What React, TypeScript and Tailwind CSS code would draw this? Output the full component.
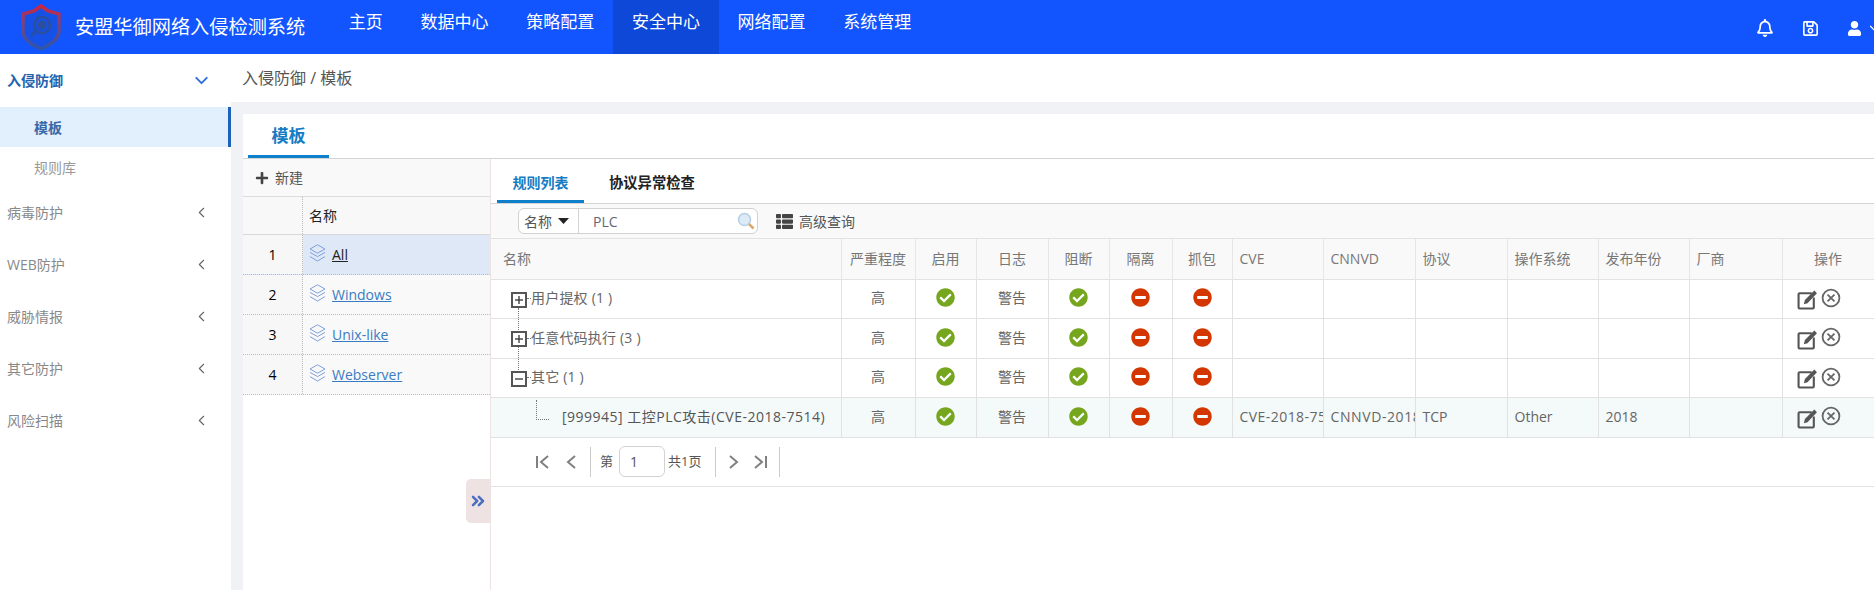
import { ChevronDown, ChevronLeft, ChevronsRight } from "lucide-react";
import { FaCheckCircle, FaMinusCircle, FaPlus, FaRegBell, FaRegSave, FaThList, FaUser } from "react-icons/fa";

const font = "font-['Open_Sans','Noto_Sans_CJK_SC',sans-serif]";

const navItems = ["主页", "数据中心", "策略配置", "安全中心", "网络配置", "系统管理"];
const sideItems = ["病毒防护", "WEB防护", "威胁情报", "其它防护", "风险扫描"];
const templates = ["All", "Windows", "Unix-like", "Webserver"];

const columns = [
  { name: "名称", w: "w-[350px]", align: "text-left pl-3" },
  { name: "严重程度", w: "w-[74px]", align: "text-center" },
  { name: "启用", w: "w-[61px]", align: "text-center" },
  { name: "日志", w: "w-[72px]", align: "text-center" },
  { name: "阻断", w: "w-[61px]", align: "text-center" },
  { name: "隔离", w: "w-[63px]", align: "text-center" },
  { name: "抓包", w: "w-[60px]", align: "text-center" },
  { name: "CVE", w: "w-[91px]", align: "text-left pl-[7px]" },
  { name: "CNNVD", w: "w-[92px]", align: "text-left pl-[7px]" },
  { name: "协议", w: "w-[92px]", align: "text-left pl-[7px]" },
  { name: "操作系统", w: "w-[91px]", align: "text-left pl-[7px]" },
  { name: "发布年份", w: "w-[91px]", align: "text-left pl-[7px]" },
  { name: "厂商", w: "w-[93px]", align: "text-left pl-[7px]" },
  { name: "操作", w: "w-[92px]", align: "text-center" },
];

const rows = [
  { label: "用户提权 (1 )", kind: "plus", h: "h-[39px]", line: "h-[24px]" },
  { label: "任意代码执行 (3 )", kind: "plus", h: "h-[40px]", line: "h-[25px]" },
  { label: "其它 (1 )", kind: "minus", h: "h-[39px]" },
  {
    label: "[999945] 工控PLC攻击(CVE-2018-7514)",
    kind: "leaf",
    h: "h-[40px]",
    cve: "CVE-2018-7514",
    cnnvd: "CNNVD-201803-1127",
    proto: "TCP",
    os: "Other",
    year: "2018",
  },
];

function Logo() {
  return (
    <svg width="40" height="46" viewBox="0 0 40 46" fill="none">
      <defs>
        <linearGradient id="shieldStroke" x1="0" y1="0" x2="0" y2="1">
          <stop offset="0" stopColor="#d0243c" />
          <stop offset="0.35" stopColor="#83407a" />
          <stop offset="1" stopColor="#2d56aa" />
        </linearGradient>
      </defs>
      <path d="M20 2 L27 7 L38 10 L38 27 C38 35 29 41 20 45 C11 41 2 35 2 27 L2 10 L13 7 Z" stroke="url(#shieldStroke)" strokeWidth="3.5" fill="#1b4dc6" fillOpacity="0.4" />
      <circle cx="21" cy="21" r="8" stroke="#2b4f9e" strokeWidth="2.5" />
      <circle cx="21" cy="21" r="4.5" fill="#2b4f9e" />
      <path d="M15 27 L10 32" stroke="#2b4f9e" strokeWidth="2.5" />
    </svg>
  );
}

function Layers() {
  return (
    <svg width="17" height="18" viewBox="0 0 17 18" fill="none" stroke="#7f9fdc" strokeWidth="1">
      <path d="M8.5 0.8 L16 5 L8.5 9.2 L1 5 Z" />
      <path d="M1 8.4 L8.5 12.6 L16 8.4" />
      <path d="M1 12.6 L8.5 17 L16 12.6" />
    </svg>
  );
}

function Magnifier() {
  return (
    <svg width="18" height="18" viewBox="0 0 18 18" fill="none">
      <path d="M11 11 L16.5 16.5" stroke="#dca96a" strokeWidth="2.5" />
      <circle cx="7.5" cy="7.5" r="6" fill="#dcebf7" stroke="#b4cfe4" strokeWidth="1.5" />
    </svg>
  );
}

function EditIcon() {
  return (
    <svg width="21" height="21" viewBox="0 0 20 20" fill="none">
      <path d="M14 4 H2.5 a1 1 0 0 0 -1 1 V17.5 a1 1 0 0 0 1 1 H15 a1 1 0 0 0 1 -1 V8" stroke="#555" strokeWidth="2" />
      <path d="M16.5 1.5 L19 4 L10 13.5 L6.5 14.5 L7.5 10.5 Z" fill="#555" />
    </svg>
  );
}

function CloseIcon() {
  return (
    <svg width="20" height="20" viewBox="0 0 19 19" fill="none" stroke="#666" strokeWidth="1.7">
      <circle cx="9.5" cy="9.5" r="8" />
      <path d="M6.2 6.2 L12.8 12.8 M12.8 6.2 L6.2 12.8" />
    </svg>
  );
}

function PageIcon({ d }: { d: string }) {
  return (
    <svg width="16" height="16" viewBox="0 0 16 16" fill="none" stroke="#808080" strokeWidth="2" className="shrink-0">
      <path d={d} />
    </svg>
  );
}

function TreeBox({ minus, line }: { minus?: boolean; line?: string }) {
  return (
    <span className="relative mt-[4px] flex h-[16px] w-[16px] shrink-0 items-center justify-center border-2 border-[#555] bg-white">
      <svg width="8" height="8" viewBox="0 0 8 8" stroke="#333" strokeWidth="1.3">
        <path d="M0 4 H8" />
        {!minus && <path d="M4 0 V8" />}
      </svg>
      {line && <span className={`absolute left-[5px] top-[14px] border-l border-dotted border-[#777] ${line}`} />}
    </span>
  );
}

export default function App() {
  return (
    <div className={`${font} flex h-[590px] w-[1874px] flex-col overflow-hidden bg-white text-[14px] text-[#666]`}>
      {/* top bar */}
      <header className="flex h-[54px] shrink-0 items-stretch bg-[#1254fe] text-white">
        <div className="ml-[21px] mt-[4px]">
          <Logo />
        </div>
        <div className="ml-[14px] w-[255px] self-center whitespace-nowrap text-[19.2px]">安盟华御网络入侵检测系统</div>
        <nav className="flex">
          {navItems.map((item) => (
            <div
              key={item}
              className={`flex items-center px-[18.85px] pb-[11px] text-[17px] ${item === "安全中心" ? "bg-[#0e48d8]" : ""}`}
            >
              {item}
            </div>
          ))}
        </nav>
        <div className="ml-auto flex items-center gap-[28px] pt-[2px]">
          <FaRegBell size={18} />
          <FaRegSave size={17} />
          <div className="flex w-[27px] items-center gap-[5px] overflow-hidden">
            <FaUser size={15} className="shrink-0" />
            <ChevronDown size={14} strokeWidth={2} className="shrink-0" />
          </div>
        </div>
      </header>

      <div className="flex min-h-0 flex-1">
        {/* side menu */}
        <aside className="w-[231px] shrink-0">
          <div className="flex h-[53px] items-center justify-between pl-[7px] pr-[19px] font-bold text-[#1f62ae]">
            <span className="text-[14px]">入侵防御</span>
            <ChevronDown size={21} strokeWidth={2.2} className="text-[#2f6fdc]" />
          </div>
          <div className="flex h-[40px] items-center border-r-[3px] border-[#1c62b9] bg-[#e2effd] pl-[34px] font-bold text-[#3a6aa8]">
            模板
          </div>
          <div className="flex h-[39px] items-center pl-[34px] pt-[1px] text-[#999]">规则库</div>
          {sideItems.map((item) => (
            <div key={item} className="flex h-[52px] items-center justify-between pl-[7px] pr-[21px] text-[#888]">
              <span>{item}</span>
              <ChevronLeft size={17} strokeWidth={1.6} className="text-[#666]" />
            </div>
          ))}
        </aside>

        <main className="flex min-w-0 flex-1 flex-col">
          <div className="flex h-[48px] shrink-0 items-center pl-[11px] text-[16px] text-[#555]">入侵防御 / 模板</div>
          <div className="flex min-h-0 flex-1 flex-col bg-[#f0f2f6] pl-[12px] pt-[12px]">
            <div className="flex min-h-0 flex-1 flex-col bg-white">
              {/* panel tab */}
              <div className="flex h-[45px] shrink-0 border-b border-[#d4d4d4] pl-[5px]">
                <div className="flex h-[44px] w-[81px] items-center justify-center border-b-[3px] border-[#0d7fcb] pt-[2px] text-[17px] font-bold text-[#167cc4]">
                  模板
                </div>
              </div>

              <div className="flex min-h-0 flex-1">
                {/* template list */}
                <div className="relative w-[248px] shrink-0 border-r border-[#eee4e4]">
                  <div className="flex h-[38px] items-center gap-[6px] border-b border-[#dcdcdc] bg-[#f9f9f9] pl-[12px] text-[14px] text-[#555]">
                    <FaPlus size={14} className="text-[#444]" />
                    新建
                  </div>
                  <div className="flex h-[38px] border-b border-[#d8d8d8] bg-[#f8f8f8] text-[#222]">
                    <div className="w-[60px] border-r border-dotted border-[#bbb]" />
                    <div className="flex items-center pl-[6px]">名称</div>
                  </div>
                  {templates.map((name, i) => (
                    <div
                      key={name}
                      className={`flex h-[40px] border-b border-dotted border-[#bbb] ${i === 0 ? "bg-[#dfe8f6]" : "bg-[#f9f9f9]"}`}
                    >
                      <div className="flex w-[60px] items-center justify-center border-r border-dotted border-[#bbb] bg-[#f7f7f7] text-black">
                        {i + 1}
                      </div>
                      <div className="flex items-center gap-[6px] pl-[6px]">
                        <span className="mb-[4px]">
                          <Layers />
                        </span>
                        <span className={`underline ${i === 0 ? "text-[#222]" : "text-[#3a7cc4]"}`}>{name}</span>
                      </div>
                    </div>
                  ))}
                  <div className="absolute right-0 top-[320px] flex h-[44px] w-[24px] items-center justify-center rounded-l-[5px] bg-[#eee2e3]">
                    <ChevronsRight size={20} strokeWidth={3} className="text-[#4a6fc0]" />
                  </div>
                </div>

                {/* rule list */}
                <div className="min-w-0 flex-1">
                  <div className="flex h-[45px] border-b border-[#d4d4d4] pl-[6px] font-bold">
                    <div className="flex h-[44px] w-[87px] items-center justify-center border-b-[3px] border-[#0d7fcb] pt-[5px] text-[#167cc4]">
                      规则列表
                    </div>
                    <div className="ml-[25px] flex h-[44px] items-center pt-[3px] text-[14.3px] text-[#222]">协议异常检查</div>
                  </div>
                  <div className="flex h-[35px] items-center border-b border-[#e2e2e2] bg-[#f9f9f9] pl-[27px]">
                    <div className="flex h-[26px] w-[240px] items-center rounded-[6px] border border-[#d2d2d2] bg-white">
                      <div className="flex h-full w-[60px] items-center gap-[5px] border-r border-[#d2d2d2] pl-[5px] text-[#555]">
                        名称
                        <svg width="11" height="6" viewBox="0 0 11 6" className="ml-[1px]">
                          <path d="M0 0 H11 L5.5 6 Z" fill="#222" />
                        </svg>
                      </div>
                      <span className="ml-[14px] text-[#667]">PLC</span>
                      <span className="ml-auto mr-[2px]">
                        <Magnifier />
                      </span>
                    </div>
                    <div className="ml-[18px] flex items-center gap-[6px] text-[#555]">
                      <FaThList size={17} className="text-[#444]" />
                      高级查询
                    </div>
                  </div>

                  <table className="w-[1383px] table-fixed border-collapse">
                    <colgroup>
                      {columns.map((c) => (
                        <col key={c.name} className={c.w} />
                      ))}
                    </colgroup>
                    <thead>
                      <tr className="h-[40px] border-b border-[#e2e2e2] bg-[#f9f9f9]">
                        {columns.map((c) => (
                          <th key={c.name} className={`border-r border-[#e6e6e6] font-normal text-[#777] ${c.align}`}>
                            {c.name}
                          </th>
                        ))}
                      </tr>
                    </thead>
                    <tbody>
                      {rows.map((r) => (
                        <tr key={r.label} className={`${r.h} border-b border-[#e2e2e2] [&>td]:pb-[2px] ${r.kind === "leaf" ? "bg-[#f4f9f9]" : ""}`}>
                          <td className="border-r border-[#e2e2e2] pl-[20px] text-[#666]">
                            {r.kind === "leaf" ? (
                              <div className="flex items-center pl-[25px] text-[#555]">
                                <span className="mb-[12px] h-[20px] w-[13px] border-b border-l border-dotted border-[#777]" />
                                <span className="ml-[13px] whitespace-nowrap tracking-[0.5px]">{r.label}</span>
                              </div>
                            ) : (
                              <div className="flex items-center">
                                <TreeBox minus={r.kind === "minus"} line={r.line} />
                                <span className="mt-[2px] w-[4px] border-t border-dotted border-[#777]" />
                                <span className="whitespace-nowrap tracking-[0.2px]">{r.label}</span>
                              </div>
                            )}
                          </td>
                          <td className="border-r border-[#e2e2e2] text-center">高</td>
                          <td className="border-r border-[#e2e2e2]">
                            <FaCheckCircle size={19} className="mx-auto text-[#76a51e]" />
                          </td>
                          <td className="border-r border-[#e2e2e2] text-center">警告</td>
                          <td className="border-r border-[#e2e2e2]">
                            <FaCheckCircle size={19} className="mx-auto text-[#76a51e]" />
                          </td>
                          <td className="border-r border-[#e2e2e2]">
                            <FaMinusCircle size={19} className="mx-auto text-[#d43600]" />
                          </td>
                          <td className="border-r border-[#e2e2e2]">
                            <FaMinusCircle size={19} className="mx-auto text-[#d43600]" />
                          </td>
                          <td className="overflow-hidden whitespace-nowrap border-r border-[#e2e2e2] pl-[7px] tracking-[0.45px]">{r.cve}</td>
                          <td className="overflow-hidden whitespace-nowrap border-r border-[#e2e2e2] pl-[7px] tracking-[0.6px]">{r.cnnvd}</td>
                          <td className="border-r border-[#e2e2e2] pl-[7px]">{r.proto}</td>
                          <td className="border-r border-[#e2e2e2] pl-[7px]">{r.os}</td>
                          <td className="border-r border-[#e2e2e2] pl-[7px]">{r.year}</td>
                          <td className="border-r border-[#e2e2e2]" />
                          <td>
                            <div className="flex items-center gap-[3px] pl-[14px]">
                              <span className="mt-[4px]">
                                <EditIcon />
                              </span>
                              <CloseIcon />
                            </div>
                          </td>
                        </tr>
                      ))}
                    </tbody>
                  </table>

                  {/* pager */}
                  <div className="flex h-[49px] items-center border-b border-[#e2e2e2] pl-[44px] text-[13px] text-[#555]">
                    <PageIcon d="M2 2 V14 M13 2 L6 8 L13 14" />
                    <span className="ml-[13px]">
                      <PageIcon d="M11 2 L4 8 L11 14" />
                    </span>
                    <span className="ml-[10px] h-[30px] border-l border-[#ccc]" />
                    <span className="ml-[9px]">第</span>
                    <span className="ml-[6px] flex h-[31px] w-[46px] items-center rounded-[6px] border border-[#d2d2d2] pl-[10px] text-[14px]">1</span>
                    <span className="ml-[3px]">共1页</span>
                    <span className="ml-[14px] h-[30px] border-l border-[#ccc]" />
                    <span className="ml-[9px]">
                      <PageIcon d="M5 2 L12 8 L5 14" />
                    </span>
                    <span className="ml-[11px]">
                      <PageIcon d="M3 2 L10 8 L3 14 M14 2 V14" />
                    </span>
                    <span className="ml-[11px] h-[30px] border-l border-[#ccc]" />
                  </div>
                </div>
              </div>
            </div>
          </div>
        </main>
      </div>
    </div>
  );
}
